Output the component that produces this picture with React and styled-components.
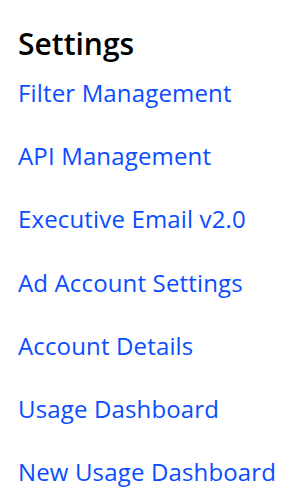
import React from "react";
import styled, { createGlobalStyle } from "styled-components";

const GlobalStyle = createGlobalStyle`
  body {
    margin: 0;
    background: #fff;
    font-family: "Open Sans", "Noto Sans", sans-serif;
  }
`;

const Panel = styled.div`
  padding: 24px 18px 0 18px;
`;

const Title = styled.h2`
  margin: 0 0 13px 0;
  font-size: 30px;
  font-weight: 600;
  line-height: 40px;
  color: #000;
`;

const LinkList = styled.ul`
  list-style: none;
  margin: 0;
  padding: 0;
  display: flex;
  flex-direction: column;
  gap: 31.2px;
`;

const LinkItem = styled.li`
  font-size: 24px;
  line-height: 32px;
  white-space: nowrap;
  letter-spacing: 0.15px;
`;

const Link = styled.a`
  color: #0a4dff;
  text-decoration: none;
`;

const links = [
  "Filter Management",
  "API Management",
  "Executive Email v2.0",
  "Ad Account Settings",
  "Account Details",
  "Usage Dashboard",
  "New Usage Dashboard",
];

export default function App() {
  return (
    <>
      <GlobalStyle />
      <Panel>
        <Title>Settings</Title>
        <LinkList>
          {links.map((l) => (
            <LinkItem key={l}>
              <Link href="#">{l}</Link>
            </LinkItem>
          ))}
        </LinkList>
      </Panel>
    </>
  );
}
